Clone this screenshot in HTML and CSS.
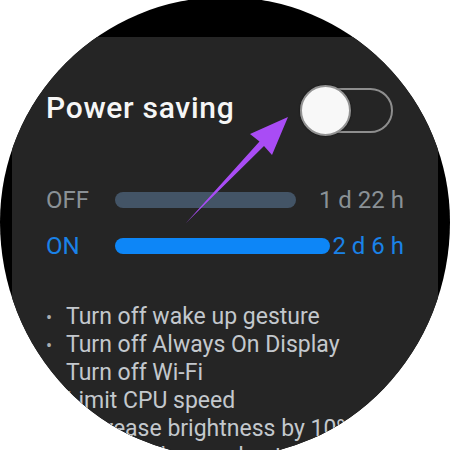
FILE: index.html
```html
<!DOCTYPE html>
<html lang="en">
<head>
    <meta charset="UTF-8">
    <meta name="viewport" content="width=device-width, initial-scale=1.0">
    <title>Power saving</title>
    <link rel="stylesheet" href="styles.css">
</head>
<body>
    <div class="watch">
        <div class="screen">
            <div class="title-row">
                <div class="title">Power saving</div>
                <div class="toggle"><div class="thumb"></div></div>
            </div>
            <div class="usage">
                <div class="row off">
                    <div class="label">OFF</div>
                    <div class="bar-wrap"><div class="bar" style="width: 181px"></div></div>
                    <div class="value">1 d 22 h</div>
                </div>
                <div class="row on">
                    <div class="label">ON</div>
                    <div class="bar-wrap"><div class="bar" style="width: 215px"></div></div>
                    <div class="value">2 d 6 h</div>
                </div>
            </div>
            <ul class="features">
                <li>Turn off wake up gesture</li>
                <li>Turn off Always On Display</li>
                <li>Turn off Wi-Fi</li>
                <li>Limit CPU speed</li>
                <li>Decrease brightness by 10%</li>
                <li>Limit background network usage</li>
            </ul>
        </div>
    </div>
    <svg class="pointer" width="450" height="450" viewBox="0 0 450 450">
        <polygon points="288,117 272,155 264,146 186,223 259.5,141.5 250,134" fill="#a94cf5"/>
    </svg>
</body>
</html>
```

FILE: styles.css
```css
body {
    margin: 0;
    width: 450px;
    height: 450px;
    overflow: hidden;
    background-color: #fff;
    font-family: Roboto, "Noto Sans", sans-serif;
}
.watch {
    width: 450px;
    height: 460px;
    margin-top: -3px;
    border-radius: 225px 225px 225px 225px / 225px 225px 235px 235px;
    background-color: #000;
    overflow: hidden;
}
.screen {
    margin: 40px 12px 0;
    height: 420px;
    padding: 48px 34px 0;
    box-sizing: border-box;
    background-color: #252525;
}
.title-row {
    display: flex;
    justify-content: space-between;
    align-items: center;
    height: 50px;
}
.title {
    color: #f6f6f6;
    font-size: 30px;
    font-weight: 500;
    letter-spacing: 0.7px;
    margin-top: -6px;
}
.toggle {
    display: flex;
    align-items: center;
    width: 89px;
    height: 41px;
    margin-right: 11px;
    border: 2px solid #8e8e8e;
    border-radius: 24px;
}
.thumb {
    width: 47px;
    height: 47px;
    margin-left: -2px;
    border: 2px solid #939393;
    border-radius: 50%;
    background-color: #f8f8f8;
    box-shadow: 0 0 2px rgba(0, 0, 0, 0.6);
}
.usage {
    display: flex;
    flex-direction: column;
    gap: 16px;
    margin-top: 50px;
}
.row {
    display: grid;
    grid-template-columns: 69px 1fr auto;
    align-items: center;
    height: 30px;
    font-size: 24px;
}
.bar {
    height: 16px;
    border-radius: 8px;
}
.off {
    color: #8a9196;
}
.off .bar {
    background-color: #435466;
}
.on {
    color: #1a82e8;
}
.on .bar {
    background-color: #0d86f7;
}
.features {
    list-style: none;
    margin: 42px 0 0;
    padding: 0 0 0 20px;
    color: #c3c8cd;
    font-size: 23px;
    line-height: 27px;
}
.features li {
    white-space: nowrap;
}
.features li::before {
    content: "•";
    display: inline-block;
    width: 20px;
    margin-left: -20px;
    font-size: 18px;
    color: #a9aeb3;
}
.pointer {
    position: absolute;
    top: 0;
    left: 0;
    pointer-events: none;
}
```
